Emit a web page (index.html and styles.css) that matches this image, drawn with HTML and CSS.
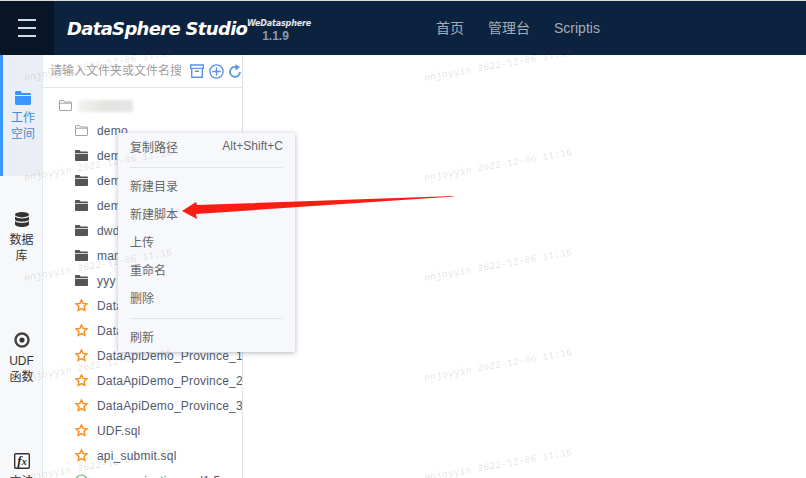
FILE: index.html
```html
<!DOCTYPE html>
<html lang="zh">
<head>
<meta charset="utf-8">
<title>DataSphere Studio</title>
<link rel="stylesheet" href="styles.css">
</head>
<body>
<div class="app">
  <header class="topbar">
    <div class="burger"><i></i><i></i><i></i></div>
    <div class="brand">
      <span class="brand-name">DataSphere Studio</span>
      <span class="brand-side"><b>WeDatasphere</b><em>1.1.9</em></span>
    </div>
    <nav class="nav"><a>首页</a><a>管理台</a><a>Scriptis</a></nav>
  </header>
  <div class="main">
    <aside class="side">
      <div class="side-item active">
        <svg class="side-icon" width="16" height="14" viewBox="0 0 16 14"><path fill="#3a97ff" d="M0 1.5C0 .7.6 0 1.4 0h4.2l1.5 2h7.5c.8 0 1.4.6 1.4 1.4V4H0zM0 5h16v7.6c0 .8-.6 1.4-1.4 1.4H1.4C.6 14 0 13.400 0 12.600z"/></svg>
        <span>工作<br>空间</span>
      </div>
      <div class="side-item">
        <svg class="side-icon" width="14" height="15" viewBox="0 0 14 15"><ellipse cx="7" cy="2.700" rx="7" ry="2.700" fill="#333"/><path fill="#333" d="M0 4.500c1.500 1.400 4 1.900 7 1.900s5.500-.5 7-1.900v2.800C14 8.800 10.900 9.700 7 9.700S0 8.800 0 7.300zM0 9c1.500 1.400 4 1.900 7 1.900s5.500-.5 7-1.900v3.300C14 13.800 10.900 15 7 15s-7-1.200-7-2.700z"/></svg>
        <span>数据<br>库</span>
      </div>
      <div class="side-item">
        <svg class="side-icon" width="16" height="16" viewBox="0 0 16 16"><circle cx="8" cy="8" r="6.500" fill="#fff" stroke="#444" stroke-width="2.400"/><circle cx="8" cy="8" r="2.600" fill="#333"/></svg>
        <span>UDF<br>函数</span>
      </div>
      <div class="side-item">
        <svg class="side-icon" width="16" height="16" viewBox="0 0 16 16"><rect x=".7" y=".7" width="14.600" height="14.600" rx="1" fill="#fff" stroke="#333" stroke-width="1.400"/></svg>
        <span class="fx-label">f<small>x</small></span>
        <span>方法<br>函数</span>
      </div>
    </aside>
    <section class="tree">
      <div class="search">
        <input class="search-input" type="text" placeholder="请输入文件夹或文件名搜索">
        <svg width="14" height="14" viewBox="0 0 14 14" class="tool"><path fill="none" stroke="#5b94e8" stroke-width="1.400" d="M.7 1h12.600v3.400H.7zM1.700 4.400v8.900h10.600V4.400M5 7.200h4"/></svg>
        <svg width="15" height="15" viewBox="0 0 15 15" class="tool"><circle cx="7.500" cy="7.500" r="6.600" fill="none" stroke="#5b94e8" stroke-width="1.400"/><path stroke="#5b94e8" stroke-width="1.400" d="M7.500 3.200v8.600M3.200 7.500h8.600"/></svg>
        <svg width="12" height="14" viewBox="0 0 12 14" class="tool"><path fill="none" stroke="#5b94e8" stroke-width="1.800" d="M8.300 3.400A5 5 0 1 0 11 8"/><path fill="#5b94e8" d="M6.500 0v6.500L11 3.300z"/></svg>
      </div>
      <ul class="rows">
        <li class="row root"><svg class="ficon" viewBox="0 0 13 11"><use href="#folder-o"/></svg><span class="blurred"></span></li>
        <li class="row"><svg class="ficon" viewBox="0 0 13 11"><use href="#folder-o"/></svg>demo</li>
        <li class="row"><svg class="ficon" viewBox="0 0 13 11"><use href="#folder"/></svg>demo1</li>
        <li class="row"><svg class="ficon" viewBox="0 0 13 11"><use href="#folder"/></svg>demo2</li>
        <li class="row"><svg class="ficon" viewBox="0 0 13 11"><use href="#folder"/></svg>demo3</li>
        <li class="row"><svg class="ficon" viewBox="0 0 13 11"><use href="#folder"/></svg>dwd</li>
        <li class="row"><svg class="ficon" viewBox="0 0 13 11"><use href="#folder"/></svg>man</li>
        <li class="row"><svg class="ficon" viewBox="0 0 13 11"><use href="#folder"/></svg>yyy</li>
        <li class="row file"><svg class="sicon" viewBox="0 0 13 13"><use href="#star"/></svg>DataApiDemo.sql</li>
        <li class="row file"><svg class="sicon" viewBox="0 0 13 13"><use href="#star"/></svg>DataApiDemo_1.sql</li>
        <li class="row file"><svg class="sicon" viewBox="0 0 13 13"><use href="#star"/></svg>DataApiDemo_Province_1</li>
        <li class="row file"><svg class="sicon" viewBox="0 0 13 13"><use href="#star"/></svg>DataApiDemo_Province_2</li>
        <li class="row file"><svg class="sicon" viewBox="0 0 13 13"><use href="#star"/></svg>DataApiDemo_Province_3</li>
        <li class="row file"><svg class="sicon" viewBox="0 0 13 13"><use href="#star"/></svg>UDF.sql</li>
        <li class="row file"><svg class="sicon" viewBox="0 0 13 13"><use href="#star"/></svg>api_submit.sql</li>
        <li class="row file"><svg class="sicon" viewBox="0 0 13 13"><circle cx="6.500" cy="6.500" r="5.500" fill="none" stroke="#5fae6a" stroke-width="1.200"/></svg>communication_sql1.5</li>
      </ul>
    </section>
    <section class="content"></section>
  </div>

  <div class="menu">
    <div class="menu-item first"><span>复制路径</span><span>Alt+Shift+C</span></div>
    <hr class="menu-sep">
    <div class="menu-item">新建目录</div>
    <div class="menu-item">新建脚本</div>
    <div class="menu-item">上传</div>
    <div class="menu-item">重命名</div>
    <div class="menu-item">删除</div>
    <hr class="menu-sep">
    <div class="menu-item">刷新</div>
  </div>

  <div class="marks-diag">
    <span>KINYUNZHOUKF1 2022-12-06</span><span>KINYUNZHOUKF1 2022-12-06</span><span>KINYUNZHOUKF1 2022-12-06</span>
    <span>KINYUNZHOUKF1 2022-12-06</span><span>KINYUNZHOUKF1 2022-12-06</span><span>KINYUNZHOUKF1 2022-12-06</span>
  </div>
  <div class="marks">
    <span>enjoyyin 2022-12-06 11:16</span><span>enjoyyin 2022-12-06 11:16</span>
    <span>enjoyyin 2022-12-06 11:16</span><span>enjoyyin 2022-12-06 11:16</span>
    <span>enjoyyin 2022-12-06 11:16</span><span>enjoyyin 2022-12-06 11:16</span>
    <span>enjoyyin 2022-12-06 11:16</span><span>enjoyyin 2022-12-06 11:16</span>
    <span>enjoyyin 2022-12-06 11:16</span><span>enjoyyin 2022-12-06 11:16</span>
  </div>

  <svg class="arrow" width="806" height="478" viewBox="0 0 806 478"><polygon fill="#fb1c14" points="182,211 196,202 197,205 453,196 454,196.500 196,214 197,219"/></svg>
</div>

<svg class="defs" width="0" height="0">
  <symbol id="folder" viewBox="0 0 13 11"><path fill="#555" d="M0 1c0-.6.4-1 1-1h3.500l1.200 1.500H12c.6 0 1 .4 1 1V3H0zM0 3.800h13V10c0 .6-.4 1-1 1H1c-.6 0-1-.4-1-1z"/></symbol>
  <symbol id="folder-o" viewBox="0 0 13 11"><path fill="none" stroke="#a8a0a2" d="M.5 1c0-.3.2-.5.5-.5h3.300l1.200 1.500H12c.3 0 .5.2.5.5V10c0 .3-.2.5-.5.500H1c-.3 0-.5-.2-.5-.5zM.5 3.200h12"/></symbol>
  <symbol id="star" viewBox="0 0 13 13"><path fill="#fff" stroke="#f78f22" stroke-width="1.500" stroke-linejoin="miter" d="M6.500 1l1.500 3.400 3.900.5-2.800 2.600.7 3.900-3.300-1.900-3.300 1.900.7-3.900L1 4.900l3.900-.5z"/></symbol>
</svg>
</body>
</html>
```
FILE: styles.css
```css
* { box-sizing: border-box; }
html, body { margin: 0; height: 100%; }
body { font-family: "Liberation Sans", "Noto Sans CJK SC", sans-serif; font-size: 12px; color: #515a6e; background: #fff; overflow: hidden; }
.app { position: relative; width: 806px; height: 478px; overflow: hidden; display: flex; flex-direction: column; border-top: 1px solid #dcdcd8; }

.topbar { flex: none; height: 54px; background: #0c2340; display: flex; align-items: center; }
.burger { width: 54px; height: 54px; background: #071527; display: flex; flex-direction: column; justify-content: center; align-items: center; gap: 6px; }
.burger i { display: block; width: 18px; height: 2px; background: #d5d9de; }
.brand { display: flex; align-items: flex-start; margin-left: 13px; width: 369px; }
.brand-name { font: italic bold 18px/24px "DejaVu Sans", sans-serif; color: #fff; white-space: nowrap; width: 181px; margin-top: 4px; letter-spacing: -.68px; }
.brand-side { display: flex; flex-direction: column; align-items: center; margin-top: 6px; width: 62px; }
.brand-side b { font: italic bold 8px/10px "DejaVu Sans", sans-serif; color: #e4e7ea; white-space: nowrap; letter-spacing: -.15px; }
.brand-side em { font: bold 12px/14px "Liberation Sans", sans-serif; color: #8f99a6; margin-right: 7px; }
.nav { display: flex; gap: 24px; font-size: 14px; line-height: 20px; color: #a5adb8; }

.main { flex: 1; min-height: 0; display: flex; }
.side { flex: none; width: 43px; background: #f7f8fa; border-right: 1px solid #e3e7ee; }
.side-item { position: relative; height: 121px; padding: 2px 0 0 1px; display: flex; flex-direction: column; align-items: center; justify-content: center; gap: 5px; font-size: 12px; line-height: 16px; color: #333; text-align: center; }
.side-item.active { background: #ebeef5; color: #3a8ee6; border-left: 3px solid #3a97ff; padding-left: 1px; }
.fx-label { position: absolute; left: 2px; right: 0; top: 35px; font: italic bold 13px/16px "Liberation Serif", serif; color: #222; }
.fx-label small { font-size: 10px; }

.tree { flex: none; width: 200px; border-right: 1px solid #dfe3ea; background: #fff; overflow: hidden; }
.search { height: 33px; display: flex; align-items: center; padding-left: 7px; border-bottom: 1px solid #e3e6ec; }
.search-input { width: 131px; margin: 0 9px 1px 0; padding: 0; border: 0; outline: 0; background: transparent; font: 12px "Liberation Sans", "Noto Sans CJK SC", sans-serif; color: #515a6e; }
.search-input::placeholder { color: #a0a0a0; opacity: 1; }
.tool { flex: none; margin-right: 5px; }
.rows { list-style: none; margin: 5px 0 0; padding: 0; }
.row { height: 25px; display: flex; align-items: center; padding-left: 32px; white-space: nowrap; letter-spacing: .2px; }
.row.root { padding-left: 16px; }
.ficon { flex: none; width: 13px; height: 11px; margin-right: 9px; }
.sicon { flex: none; width: 13px; height: 13px; margin-right: 9px; }
.row.root .ficon { margin-right: 6px; }
.blurred { width: 55px; height: 12px; background: linear-gradient(90deg, #f3f3f2, #e4e3de 50%, #e6e4e8); filter: blur(1.500px); }
.content { flex: 1; background: #fff; }

.menu { position: absolute; left: 118px; top: 132px; width: 177px; height: 219px; padding: 0 12px; background: #f7f8fc; box-shadow: 0 1px 5px rgba(60, 70, 90, .4); }
.menu-item { height: 28px; display: flex; align-items: center; justify-content: space-between; color: #666; white-space: nowrap; }
.menu-item.first { margin-top: -1px; }
.menu-sep { height: 1px; margin: 7px 0 3px; border: 0; background: #e3e5ea; }

.marks, .marks-diag { position: absolute; pointer-events: none; display: grid; }
.marks { left: -102px; top: 14px; grid-template-columns: 400px 400px; grid-auto-rows: 100px; }
.marks span { display: flex; align-items: center; justify-content: center; transform: rotate(-10deg); font: 10px "Liberation Mono", monospace; color: rgba(60, 60, 60, .16); white-space: nowrap; }
.marks-diag { left: 140px; top: -20px; grid-template-columns: repeat(3, 250px); grid-auto-rows: 260px; }
.marks-diag span { display: flex; align-items: center; justify-content: center; transform: rotate(-45deg); font: 18px "Liberation Serif", serif; letter-spacing: 1px; color: rgba(0, 0, 0, .022); white-space: nowrap; }

.arrow { position: absolute; left: 0; top: -1px; pointer-events: none; }
.defs { position: absolute; }
```
